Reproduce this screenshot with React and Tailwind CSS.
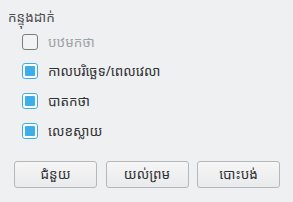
import React from "react";

const font = { fontFamily: '"Noto Sans", "Noto Sans Khmer", "DejaVu Sans", sans-serif' };

function Box({ checked }) {
  return checked ? (
    <div className="w-[16px] h-[16px] rounded-[3px] border border-[#3daee9] bg-white flex items-center justify-center">
      <div className="w-[10px] h-[10px] bg-[#3daee9] rounded-[1px]" />
    </div>
  ) : (
    <div className="w-[16px] h-[16px] rounded-[3px] border border-[#7a7c7e] bg-[#f2f3f4]" />
  );
}

function Row({ checked, label, disabled }) {
  return (
    <div className="flex items-center h-[29.67px] pl-[22px] gap-[10px]">
      <Box checked={checked} />
      <span className={"text-[13.5px] " + (disabled ? "text-[#a0a2a4]" : "text-[#2f3133]")}>{label}</span>
    </div>
  );
}

export default function App() {
  return (
    <div className="w-[293px] h-[202px] bg-[#eff0f1] overflow-hidden" style={font}>
      <div className="pt-[7px] pl-[8px] text-[13.5px] text-[#4d4f51] h-[27px] leading-[20px]">កន្ទុងដាក់</div>
      <div className="flex flex-col">
        <Row checked={false} label="បឋមកថា" disabled />
        <Row checked label="កាលបរិច្ឆេទ/ពេលវេលា" />
        <Row checked label="បាតកថា" />
        <Row checked label="លេខស្លាយ" />
      </div>
      <div className="flex gap-[8.5px] pl-[14px] mt-[15px]">
        {["ជំនួយ", "យល់ព្រម", "បោះបង់"].map((t) => (
          <div key={t} className="w-[83px] h-[27px] rounded-[3px] border border-[#b5b7b9] bg-gradient-to-b from-[#f6f6f7] to-[#e9eaeb] flex items-center justify-center text-[13.5px] text-[#2f3133]">
            {t}
          </div>
        ))}
      </div>
    </div>
  );
}
